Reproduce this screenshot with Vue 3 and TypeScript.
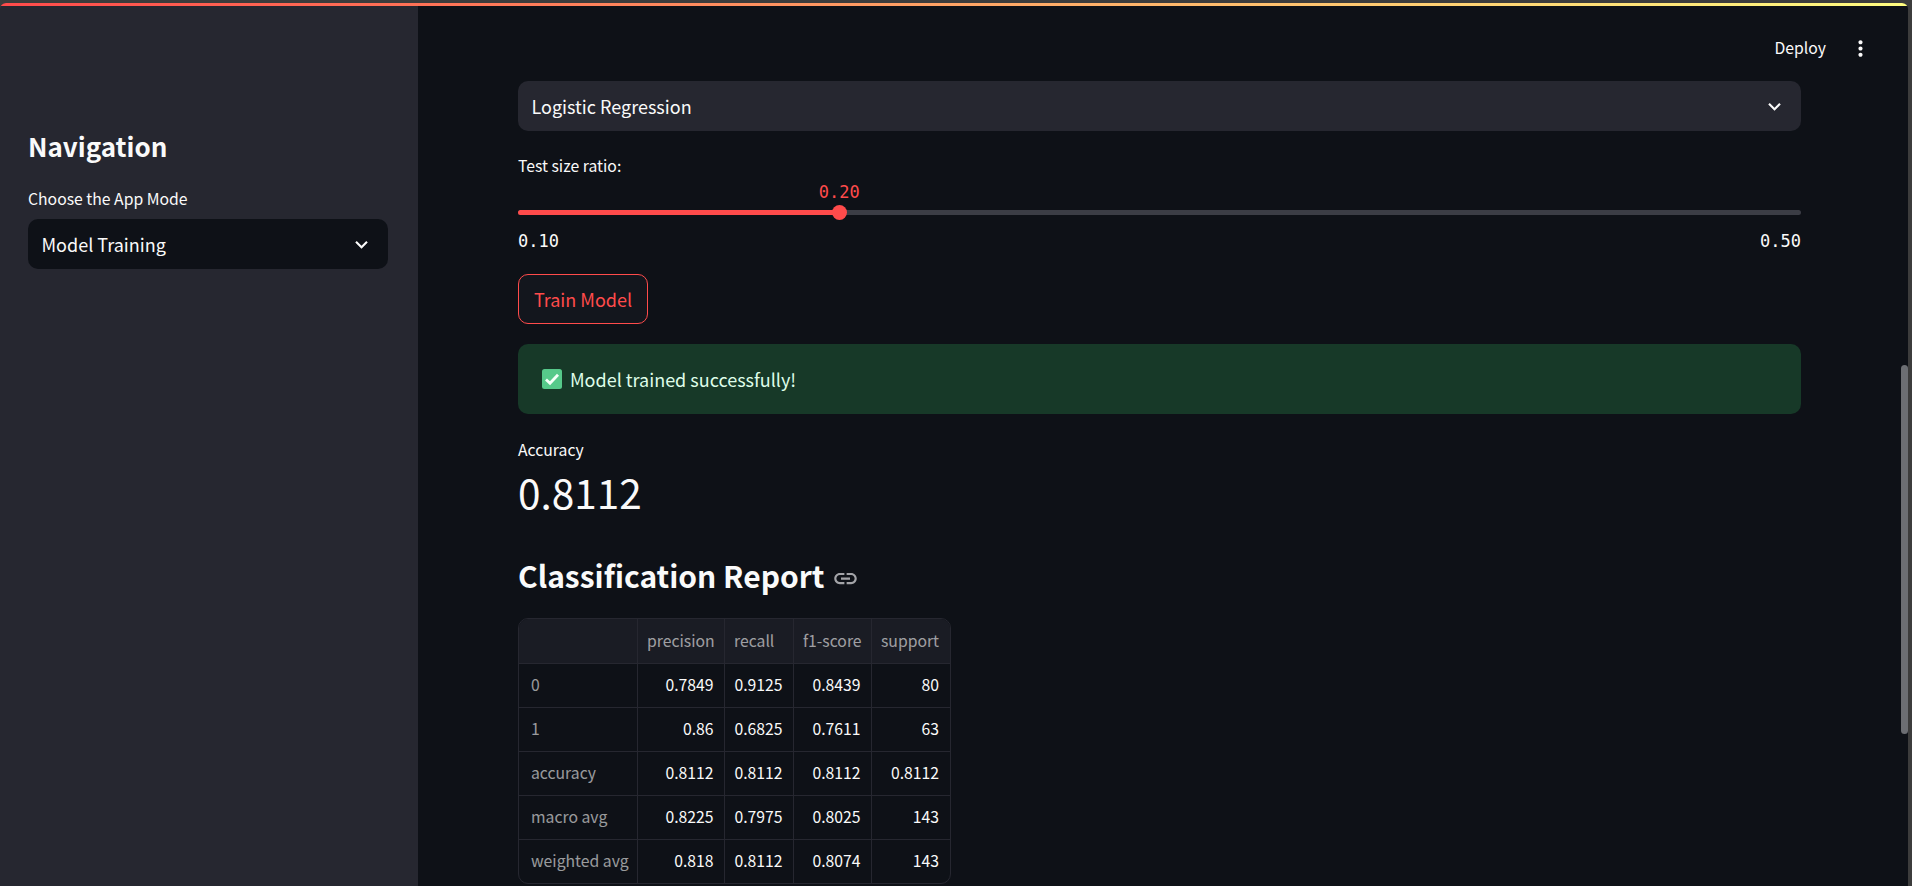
<script setup lang="ts">
type Row = { label: string; values: (string | number)[] };

const columns = ["precision", "recall", "f1-score", "support"];

const rows: Row[] = [
  { label: "0", values: ["0.7849", "0.9125", "0.8439", "80"] },
  { label: "1", values: ["0.86", "0.6825", "0.7611", "63"] },
  { label: "accuracy", values: ["0.8112", "0.8112", "0.8112", "0.8112"] },
  { label: "macro avg", values: ["0.8225", "0.7975", "0.8025", "143"] },
  { label: "weighted avg", values: ["0.818", "0.8112", "0.8074", "143"] },
];

const chevron = "M16.59 8.59L12 13.17 7.41 8.59 6 10l6 6 6-6z";
const sliderPct = 25;
</script>

<template>
  <div class="frame">
    <div class="window">
      <div class="decoration"></div>

      <aside class="sidebar">
        <h2 class="nav-title">Navigation</h2>
        <label class="field-label">Choose the App Mode</label>
        <div class="select select-dark">
          <span>Model Training</span>
          <svg class="chevron" viewBox="0 0 24 24"><path :d="chevron" /></svg>
        </div>
      </aside>

      <main class="main">
        <header class="toolbar">
          <span class="deploy">Deploy</span>
          <svg class="kebab" viewBox="0 0 24 24">
            <path
              d="M12 8c1.1 0 2-.9 2-2s-.9-2-2-2-2 .9-2 2 .9 2 2 2zm0 2c-1.1 0-2 .9-2 2s.9 2 2 2 2-.9 2-2-.9-2-2-2zm0 6c-1.1 0-2 .9-2 2s.9 2 2 2 2-.9 2-2-.9-2-2-2z"
            />
          </svg>
        </header>

        <section class="content">
          <div class="select select-light">
            <span>Logistic Regression</span>
            <svg class="chevron" viewBox="0 0 24 24"><path :d="chevron" /></svg>
          </div>

          <label class="field-label slider-label">Test size ratio:</label>
          <div class="slider">
            <div class="slider-track">
              <div class="slider-fill" :style="{ width: sliderPct + '%' }"></div>
              <div class="slider-thumb" :style="{ left: sliderPct + '%' }">
                <span class="slider-value">0.20</span>
              </div>
            </div>
            <div class="slider-range">
              <span>0.10</span>
              <span>0.50</span>
            </div>
          </div>

          <button class="train-btn" type="button">Train Model</button>

          <div class="alert">
            <svg class="check" viewBox="0 0 20 20">
              <rect width="20" height="20" rx="2.5" fill="#56c98a" />
              <path
                d="M4 10.5l4 3.8 8-8.6"
                fill="none"
                stroke="#f4fff8"
                stroke-width="2.8"
              />
            </svg>
            <span>Model trained successfully!</span>
          </div>

          <div class="metric-label">Accuracy</div>
          <div class="metric-value">0.8112</div>

          <h3 class="report-title">
            Classification Report
            <svg class="link-icon" viewBox="0 0 24 24">
              <path
                d="M3.9 12c0-1.71 1.39-3.1 3.1-3.1h4V7H7c-2.76 0-5 2.24-5 5s2.24 5 5 5h4v-1.9H7c-1.71 0-3.1-1.39-3.1-3.1zM8 13h8v-2H8v2zm9-6h-4v1.9h4c1.71 0 3.1 1.39 3.1 3.1s-1.39 3.1-3.1 3.1h-4V17h4c2.76 0 5-2.24 5-5s-2.24-5-5-5z"
              />
            </svg>
          </h3>

          <div class="table-wrap">
            <table class="report">
              <thead>
                <tr>
                  <th class="corner"></th>
                  <th v-for="col in columns" :key="col">{{ col }}</th>
                </tr>
              </thead>
              <tbody>
                <tr v-for="row in rows" :key="row.label">
                  <th class="row-label">{{ row.label }}</th>
                  <td v-for="(val, i) in row.values" :key="i">{{ val }}</td>
                </tr>
              </tbody>
            </table>
          </div>
        </section>

        <div class="scroll-thumb"></div>
      </main>
    </div>
  </div>
</template>

<style>
html,
body {
  margin: 0;
  overflow: hidden;
  background: #3c3c3c;
}
</style>

<style scoped>
.frame {
  height: 886px;
  box-sizing: border-box;
  padding: 3px 4px 0 0;
  background: #3c3c3c;
  font-family: "Noto Sans CJK SC", "Noto Sans", sans-serif;
  color: #fafafa;
  overflow: hidden;
}

.window {
  position: relative;
  display: flex;
  height: 100%;
  overflow: hidden;
  border-radius: 6px 6px 0 0;
}

.decoration {
  position: absolute;
  top: 0;
  left: 0;
  right: 0;
  height: 3px;
  background: linear-gradient(90deg, #ff4b4b, #fffd80);
  z-index: 2;
}

.sidebar {
  flex: 0 0 418px;
  box-sizing: border-box;
  padding: 123px 30px 0 28px;
  background: #262730;
}

.nav-title {
  margin: 0 0 21px;
  font-size: 26px;
  line-height: 40px;
  font-weight: 600;
}

.field-label {
  display: block;
  font-size: 15.75px;
  line-height: 24px;
}

.select {
  display: flex;
  align-items: center;
  justify-content: space-between;
  box-sizing: border-box;
  height: 50px;
  padding: 0 14px 0 13.5px;
  border-radius: 10px;
  font-size: 18px;
}

.select-dark {
  margin-top: 8px;
  background: #0e1117;
}

.select-light {
  background: #262730;
}

.chevron {
  width: 25px;
  height: 25px;
  fill: #fafafa;
}

.main {
  position: relative;
  flex: 1;
  min-width: 0;
  background: #0e1117;
  overflow: hidden;
}

.toolbar {
  display: flex;
  align-items: center;
  justify-content: flex-end;
  box-sizing: border-box;
  height: 78px;
  padding: 12px 35px 0 0;
}

.deploy {
  margin-right: 22px;
  font-size: 15.75px;
  line-height: 24px;
}

.kebab {
  width: 25px;
  height: 25px;
  fill: #fafafa;
}

.content {
  box-sizing: border-box;
  padding: 0 107px 0 100px;
}

.slider-label {
  margin-top: 23px;
}

.slider {
  margin-top: 10px;
}

.slider-track {
  position: relative;
  height: 5px;
  margin-top: 32px;
  border-radius: 3px;
  background: #3b3d45;
}

.slider-fill {
  height: 100%;
  border-radius: 3px;
  background: #ff4b4b;
}

.slider-thumb {
  position: absolute;
  top: -5px;
  width: 15px;
  height: 15px;
  margin-left: -7px;
  border-radius: 50%;
  background: #ff4b4b;
}

.slider-value {
  position: absolute;
  bottom: 18px;
  left: 50%;
  transform: translateX(-50%);
  font-family: "DejaVu Sans Mono", monospace;
  font-size: 17px;
  line-height: 20px;
  color: #ff4b4b;
}

.slider-range {
  display: flex;
  justify-content: space-between;
  margin-top: 16px;
  font-family: "DejaVu Sans Mono", monospace;
  font-size: 17px;
  line-height: 20px;
}

.train-btn {
  display: block;
  box-sizing: border-box;
  width: 130px;
  height: 50px;
  margin-top: 23px;
  padding: 0;
  border: 1px solid #ff4b4b;
  border-radius: 10px;
  background: #13161d;
  color: #ff4b4b;
  font: inherit;
  font-size: 18px;
}

.alert {
  display: flex;
  align-items: center;
  gap: 8px;
  box-sizing: border-box;
  height: 70px;
  margin-top: 20px;
  padding: 0 24px;
  border-radius: 10px;
  background: #173928;
  color: #dffde9;
  font-size: 18px;
}

.check {
  width: 20px;
  height: 20px;
  flex: none;
}

.metric-label {
  margin-top: 24px;
  font-size: 15.75px;
  line-height: 24px;
}

.metric-value {
  margin-top: 1px;
  font-size: 40.5px;
  line-height: 57px;
}

.report-title {
  display: flex;
  align-items: center;
  gap: 8px;
  margin: 33px 0 0;
  font-size: 30px;
  line-height: 44px;
  font-weight: 600;
}

.link-icon {
  width: 27px;
  height: 27px;
  margin-top: 7px;
  fill: #a3a4a8;
}

.table-wrap {
  width: 433px;
  margin-top: 21px;
  box-sizing: border-box;
  border: 1px solid #262730;
  border-radius: 10px;
  overflow: hidden;
}

.report {
  width: 100%;
  table-layout: fixed;
  border-collapse: collapse;
  font-size: 15.75px;
}

.report th,
.report td {
  height: 44px;
  padding: 0 10px 0 9.5px;
  box-sizing: border-box;
  border: 1px solid #262730;
  font-weight: 400;
  line-height: 22px;
  white-space: nowrap;
}

.report thead th {
  border-top: 0;
}

.report tbody tr:last-child th,
.report tbody tr:last-child td {
  border-bottom: 0;
}

.report th:first-child {
  border-left: 0;
  width: 118px;
}

.report thead th:nth-child(2) {
  width: 87px;
}

.report thead th:nth-child(3) {
  width: 69px;
}

.report thead th:nth-child(4) {
  width: 78px;
}

.report th:last-child,
.report td:last-child {
  border-right: 0;
  padding-right: 11px;
}

.report thead th {
  background: #1a1c24;
  color: rgba(250, 250, 250, 0.6);
  text-align: left;
}

.report .row-label {
  padding-left: 12px;
  color: rgba(250, 250, 250, 0.6);
  text-align: left;
}

.report td {
  text-align: right;
}

.scroll-thumb {
  position: absolute;
  top: 362px;
  right: 0;
  width: 7px;
  height: 369px;
  border-radius: 4px;
  background: #6c6e73;
}
</style>
